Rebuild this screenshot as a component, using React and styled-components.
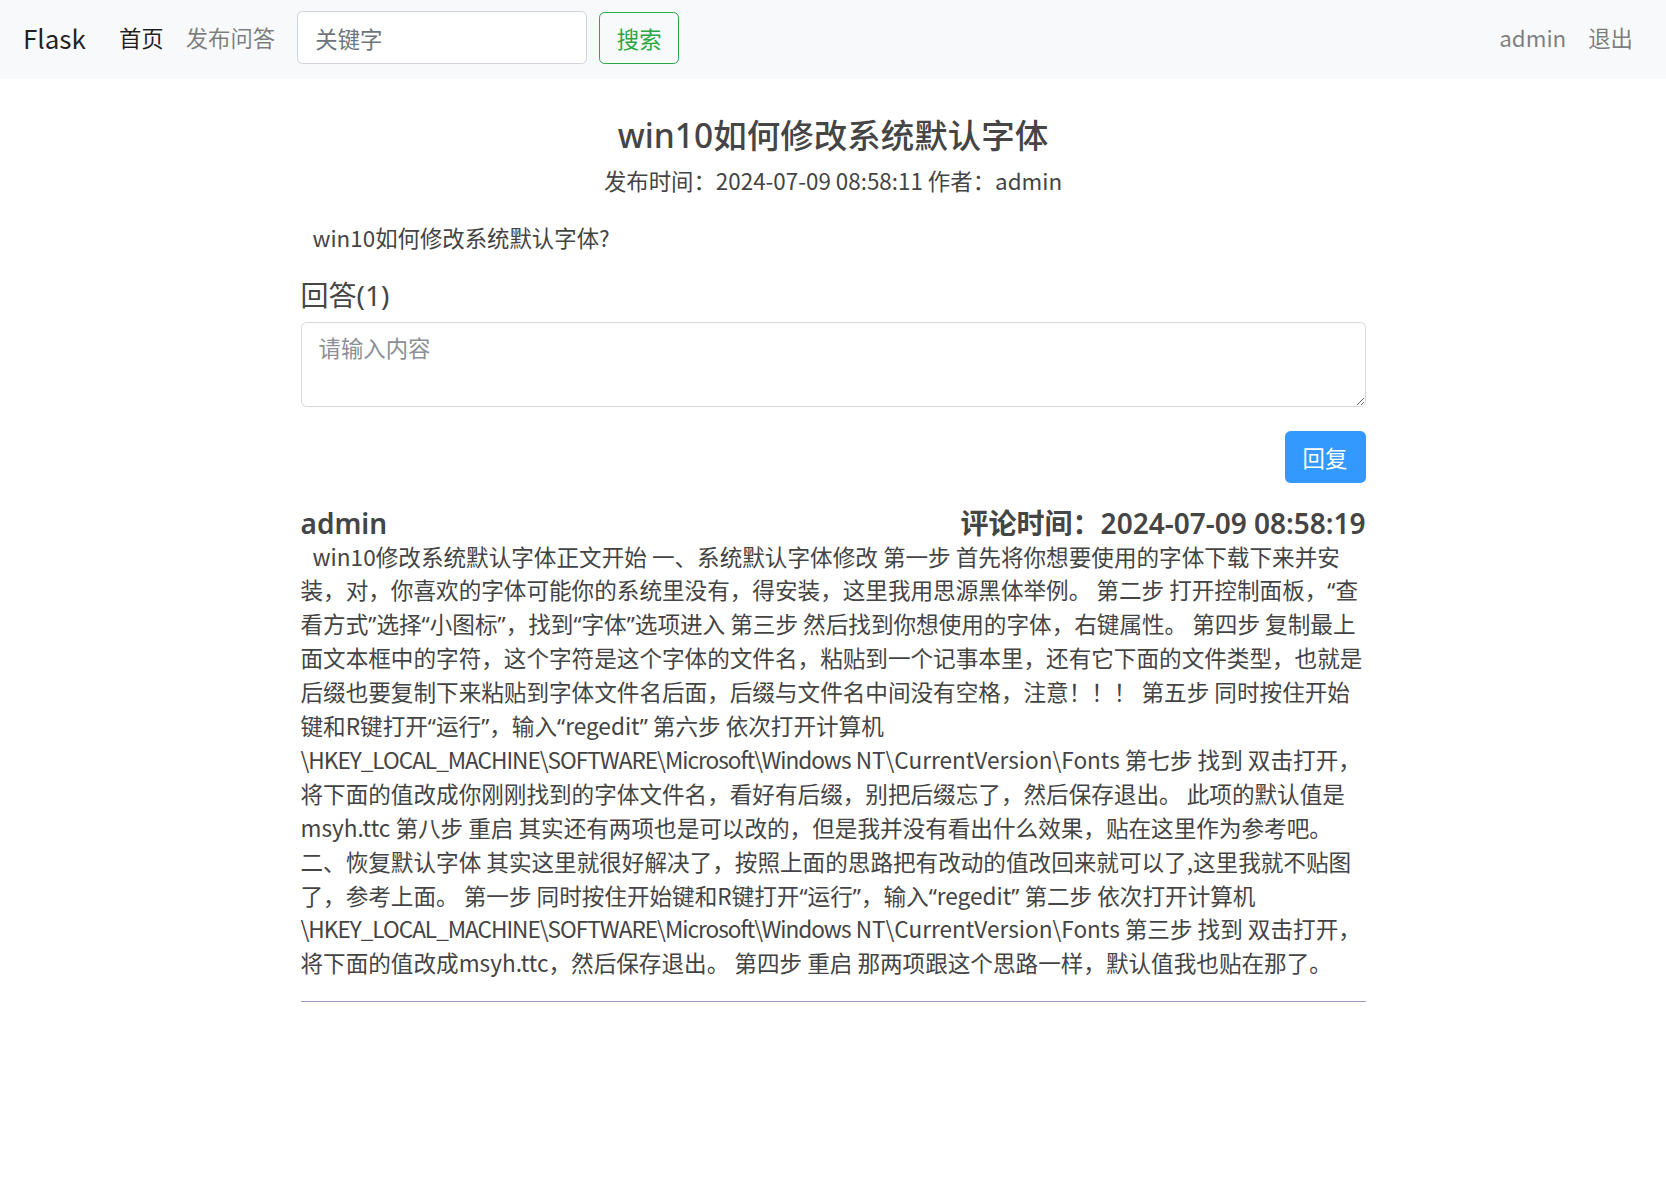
import React from 'react';
import styled, { createGlobalStyle } from 'styled-components';

const GlobalStyle = createGlobalStyle`
  html, body { margin: 0; padding: 0; background: #fff; }
  body {
    font-family: "Noto Sans CJK SC", "Noto Sans", sans-serif;
    color: #444;
    font-size: 22.4px;
    line-height: 1.5;
  }
  * { box-sizing: border-box; }
`;

const Navbar = styled.nav`
  display: flex;
  align-items: center;
  height: 79px;
  padding: 11px 22px 15px 23px;
  background: #f8f9fa;
`;

const Brand = styled.a`
  font-size: 26px;
  line-height: 1.5;
  color: rgba(0, 0, 0, 0.88);
  margin-right: 22px;
  text-decoration: none;
`;

const NavList = styled.div`
  display: flex;
  align-items: center;
  margin-left: ${(p) => (p.$right ? 'auto' : '0')};
`;

const NavLink = styled.a`
  padding: 0 11px;
  font-size: 22.4px;
  color: ${(p) => (p.$active ? 'rgba(0,0,0,0.88)' : 'rgba(0,0,0,0.5)')};
  text-decoration: none;
`;

const SearchForm = styled.form`
  display: flex;
  align-items: center;
  margin: 0 0 0 11px;
`;

const SearchInput = styled.input`
  width: 290px;
  height: 53px;
  margin-right: 12px;
  padding: 0 17px;
  border: 1px solid #ced4da;
  border-radius: 5.6px;
  background: #fff;
  font-family: inherit;
  font-size: 22.4px;
  color: #495057;
  outline: none;
  &::placeholder { color: #6c757d; }
`;

const OutlineButton = styled.button`
  width: 80px;
  height: 52px;
  border: 1px solid #28a745;
  border-radius: 5.6px;
  background: transparent;
  color: #28a745;
  font-family: inherit;
  font-size: 22.4px;
  padding: 0;
`;

const Main = styled.main`
  width: 1065px;
  margin: 0 auto;
  padding-top: 35px;
`;

const Title = styled.h3`
  margin: 0;
  text-align: center;
  font-family: "Noto Sans", "Noto Sans CJK SC", sans-serif;
  font-weight: 500;
  font-size: 33.5px;
  line-height: 42px;
  color: #454545;
`;

const Meta = styled.p`
  margin: 8px 0 0;
  text-align: center;
  line-height: 33.6px;
  color: #444;
`;

const Paragraph = styled.p`
  margin: ${(p) => p.$margin || '0'};
  text-indent: ${(p) => p.$indent || '0'};
  font-size: ${(p) => p.$size || '22.4px'};
  line-height: 33.9px;
  color: #444;
`;

const Quote = styled.span`
  font-family: "Noto Sans", sans-serif;
  line-height: 1;
`;

const PathText = styled.span`
  letter-spacing: -1px;
`;

const SectionHeading = styled.h5`
  margin: 23px 0 0;
  font-family: "Noto Sans", "Noto Sans CJK SC", sans-serif;
  font-weight: 400;
  font-size: 28px;
  line-height: 34px;
  color: #454545;
`;

const ReplyForm = styled.form`
  display: flex;
  flex-direction: column;
  margin-top: 10px;
`;

const TextArea = styled.textarea`
  width: 100%;
  height: 85px;
  padding: 8px 17px;
  border: 1px solid #d3d8dc;
  border-radius: 5.6px;
  font-family: inherit;
  font-size: 22.4px;
  line-height: 1.5;
  color: #495057;
  outline: none;
  &::placeholder { color: #8a9096; }
`;

const ButtonRow = styled.div`
  display: flex;
  justify-content: flex-end;
  margin-top: 24px;
`;

const PrimaryButton = styled.button`
  width: 81px;
  height: 52px;
  border: none;
  border-radius: 5.6px;
  background: #3399ff;
  color: #fff;
  font-family: inherit;
  font-size: 22.4px;
  padding: 0;
`;

const CommentHeader = styled.div`
  display: flex;
  justify-content: space-between;
  align-items: center;
  margin-top: 24px;
  font-family: "Noto Sans", "Noto Sans CJK SC", sans-serif;
  font-weight: 600;
  font-size: 28px;
  line-height: 33px;
  color: #454545;
`;

const Divider = styled.hr`
  margin: 21px 0 0;
  border: 0;
  border-top: 1px solid #a896c8;
`;

const commentText =
  'win10修改系统默认字体正文开始 一、系统默认字体修改 第一步 首先将你想要使用的字体下载下来并安装，对，你喜欢的字体可能你的系统里没有，得安装，这里我用思源黑体举例。 第二步 打开控制面板，“查看方式”选择“小图标”，找到“字体”选项进入 第三步 然后找到你想使用的字体，右键属性。 第四步 复制最上面文本框中的字符，这个字符是这个字体的文件名，粘贴到一个记事本里，还有它下面的文件类型，也就是后缀也要复制下来粘贴到字体文件名后面，后缀与文件名中间没有空格，注意！！！ 第五步 同时按住开始键和R键打开“运行”，输入“regedit” 第六步 依次打开计算机\\HKEY_LOCAL_MACHINE\\SOFTWARE\\Microsoft\\Windows NT\\CurrentVersion\\Fonts 第七步 找到 双击打开，将下面的值改成你刚刚找到的字体文件名，看好有后缀，别把后缀忘了，然后保存退出。 此项的默认值是msyh.ttc 第八步 重启 其实还有两项也是可以改的，但是我并没有看出什么效果，贴在这里作为参考吧。 二、恢复默认字体 其实这里就很好解决了，按照上面的思路把有改动的值改回来就可以了,这里我就不贴图了，参考上面。 第一步 同时按住开始键和R键打开“运行”，输入“regedit” 第二步 依次打开计算机\\HKEY_LOCAL_MACHINE\\SOFTWARE\\Microsoft\\Windows NT\\CurrentVersion\\Fonts 第三步 找到 双击打开，将下面的值改成msyh.ttc，然后保存退出。 第四步 重启 那两项跟这个思路一样，默认值我也贴在那了。';

function RichText({ text }) {
  const parts = text.split(/(“|”|\\HKEY_[^ ]*)/);
  return parts.map((part, i) => {
    if (part === '“' || part === '”') return <Quote key={i}>{part}</Quote>;
    if (part.startsWith('\\HKEY_')) return <PathText key={i}>{part}</PathText>;
    return <React.Fragment key={i}>{part}</React.Fragment>;
  });
}

export default function App() {
  return (
    <>
      <GlobalStyle />
      <Navbar>
        <Brand href="#">Flask</Brand>
        <NavList>
          <NavLink href="#" $active>首页</NavLink>
          <NavLink href="#">发布问答</NavLink>
        </NavList>
        <SearchForm onSubmit={(e) => e.preventDefault()}>
          <SearchInput type="text" placeholder="关键字" />
          <OutlineButton type="submit">搜索</OutlineButton>
        </SearchForm>
        <NavList $right>
          <NavLink href="#">admin</NavLink>
          <NavLink href="#">退出</NavLink>
        </NavList>
      </Navbar>
      <Main>
        <Title>win10如何修改系统默认字体</Title>
        <Meta>发布时间：2024-07-09 08:58:11 作者：admin</Meta>
        <Paragraph $margin="23px 0 0" $indent="12px">win10如何修改系统默认字体?</Paragraph>
        <SectionHeading>回答(1)</SectionHeading>
        <ReplyForm onSubmit={(e) => e.preventDefault()}>
          <TextArea placeholder="请输入内容" />
          <ButtonRow>
            <PrimaryButton type="submit">回复</PrimaryButton>
          </ButtonRow>
        </ReplyForm>
        <CommentHeader>
          <span>admin</span>
          <span>评论时间：2024-07-09 08:58:19</span>
        </CommentHeader>
        <Paragraph $indent="12px" $size="22.6px">
          <RichText text={commentText} />
        </Paragraph>
        <Divider />
      </Main>
    </>
  );
}
